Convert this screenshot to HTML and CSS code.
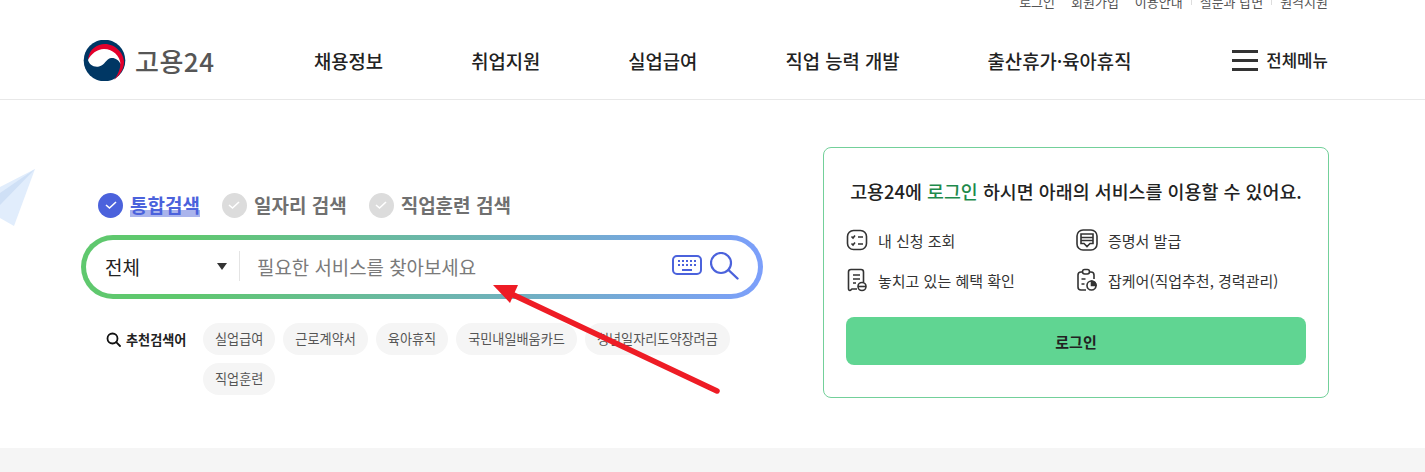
FILE: index.html
```html
<!DOCTYPE html>
<html lang="ko">
<head>
    <meta charset="UTF-8">
    <meta name="viewport" content="width=device-width, initial-scale=1.0">
    <title>고용24</title>
    <link rel="stylesheet" href="styles.css">
</head>
<body>
    <header class="header">
        <div class="util">
            <a>로그인</a>
            <a>회원가입</a>
            <a>이용안내</a>
            <a class="sep">질문과 답변</a>
            <a class="sep">원격지원</a>
        </div>
        <div class="nav-row">
            <div class="logo">
                <svg class="logo-mark" width="43" height="41" viewBox="0 0 43 41">
                    <circle cx="21.5" cy="20.5" r="20.8" fill="#003764"/>
                    <path d="M5 20 C6 9 14 4 22 4 C32 4 41 13 41 22 C41 29 37 35 31 40 C36 33 38 27 37 22 C35 14 28 10 21 10 C13 10 8 15 5 20Z" fill="#e4002b"/>
                    <path d="M5 20 C8 14 14 9 21 9 C30 9 37 16 37.5 24 C36 20 32 17.5 28 18 C23 19 22 25 16 26.500 C10 27.500 6 24 5 20Z" fill="#fff"/>
                </svg>
                <span class="logo-text">고용24</span>
            </div>
            <nav class="gnb">
                <a>채용정보</a>
                <a>취업지원</a>
                <a>실업급여</a>
                <a>직업 능력 개발</a>
                <a>출산휴가·육아휴직</a>
            </nav>
            <div class="all-menu">
                <span class="burger"><i></i><i></i><i></i></span>
                <span>전체메뉴</span>
            </div>
        </div>
    </header>

    <main class="main">
        <svg class="plane" width="36" height="60" viewBox="0 0 36 60">
            <path d="M35 0 L14 57 L0 49 L0 18Z" fill="#e1edfc"/>
            <path d="M35 0 L0 36 L0 24Z" fill="#cfe0f6"/>
        </svg>

        <section class="search-area">
            <div class="scope">
                <label class="scope-item on"><span class="check"><svg width="14" height="10" viewBox="0 0 14 10"><path d="M2 5 L5.5 8 L12 2" fill="none" stroke="#fff" stroke-width="1.6"/></svg></span><b>통합검색</b></label>
                <label class="scope-item"><span class="check"><svg width="14" height="10" viewBox="0 0 14 10"><path d="M2 5 L5.5 8 L12 2" fill="none" stroke="#fff" stroke-width="1.6"/></svg></span><b>일자리 검색</b></label>
                <label class="scope-item"><span class="check"><svg width="14" height="10" viewBox="0 0 14 10"><path d="M2 5 L5.5 8 L12 2" fill="none" stroke="#fff" stroke-width="1.6"/></svg></span><b>직업훈련 검색</b></label>
            </div>

            <div class="search-box">
                <div class="search-inner">
                    <div class="select">
                        <span>전체</span>
                        <i class="caret"></i>
                    </div>
                    <div class="query">필요한 서비스를 찾아보세요</div>
                    <svg class="kbd-icon" width="30" height="20" viewBox="0 0 30 20" fill="none">
                        <rect x="1" y="1" width="28" height="18" rx="4" stroke="#4b62dc" stroke-width="2"/>
                        <path d="M6 6h2M10 6h2M14 6h2M18 6h2M22 6h2M6 10h2M10 10h2M14 10h2M18 10h2M22 10h2" stroke="#4b62dc" stroke-width="2"/>
                        <path d="M10 15h10" stroke="#4b62dc" stroke-width="2"/>
                    </svg>
                    <svg class="find-icon" width="29" height="28" viewBox="0 0 29 28" fill="none">
                        <circle cx="11" cy="11" r="10" stroke="#4b62dc" stroke-width="2.2"/>
                        <path d="M18.5 18 L27.5 26.5" stroke="#4b62dc" stroke-width="2.4" stroke-linecap="round"/>
                    </svg>
                </div>
            </div>

            <div class="keywords">
                <div class="kw-title">
                    <svg width="15" height="15" viewBox="0 0 15 15" fill="none">
                        <circle cx="6.5" cy="6.5" r="5" stroke="#111" stroke-width="1.8"/>
                        <path d="M10.2 10.2 L14 14" stroke="#111" stroke-width="1.8" stroke-linecap="round"/>
                    </svg>
                    <span>추천검색어</span>
                </div>
                <div class="kw-tags">
                    <a>실업급여</a>
                    <a>근로계약서</a>
                    <a>육아휴직</a>
                    <a>국민내일배움카드</a>
                    <a>청년일자리도약장려금</a>
                    <a>직업훈련</a>
                </div>
            </div>
        </section>

        <aside class="login-card">
            <h2>고용24에 <em>로그인</em> 하시면 아래의 서비스를 이용할 수 있어요.</h2>
            <ul class="svc-list">
                <li>
                    <svg width="22" height="22" viewBox="0 0 22 22" fill="none" stroke="#333" stroke-width="1.6">
                        <rect x="1.5" y="1.5" width="19" height="19" rx="6"/>
                        <path d="M5.5 7.5 L7 9 L9 6.5M5.5 14.5 L7 16 L9 13.5M12 8h5M12 15h5"/>
                    </svg>
                    <span>내 신청 조회</span>
                </li>
                <li>
                    <svg width="22" height="22" viewBox="0 0 22 22" fill="none" stroke="#333" stroke-width="1.6">
                        <rect x="1" y="1" width="20" height="20" rx="6"/>
                        <path d="M5 5h12v9.5h-3l-3 3l-3-3h-3zM5 8.5h12M5 11.5h12"/>
                    </svg>
                    <span>증명서 발급</span>
                </li>
                <li>
                    <svg width="22" height="24" viewBox="0 0 22 24" fill="none" stroke="#333" stroke-width="1.6">
                        <path d="M11 21H6c-.8 0-1 1.5-2 1.5s-1.5-1-1.5-2V4c0-1.5 1-2.5 2.500-2.500h10c1.500 0 2.500 1 2.500 2.500v10"/>
                        <path d="M7 7h7M7 11h7M7 15h3"/>
                        <circle cx="16" cy="18.5" r="4"/>
                        <path d="M12 18.5h8"/>
                    </svg>
                    <span>놓치고 있는 혜택 확인</span>
                </li>
                <li>
                    <svg width="22" height="24" viewBox="0 0 22 24" fill="none" stroke="#333" stroke-width="1.6">
                        <path d="M6.5 4H5C3 4 2 5 2 7v12c0 2 1 3 3 3h5"/>
                        <path d="M13.5 4H15c2 0 3 1 3 3v4"/>
                        <rect x="6.5" y="1.5" width="7" height="4.5" rx="2.2"/>
                        <path d="M5.5 11h4M5.5 16h3"/>
                        <circle cx="15.5" cy="17.5" r="4.5"/>
                        <path d="M15.5 17.5V13a4.5 4.5 0 0 1 4.5 4.5z" fill="#333"/>
                    </svg>
                    <span>잡케어(직업추천, 경력관리)</span>
                </li>
            </ul>
            <button class="login-btn">로그인</button>
        </aside>

        <svg class="arrow" width="240" height="120" viewBox="0 0 240 120">
            <path d="M230 112 L18 12" stroke="#ee1c25" stroke-width="5.5" stroke-linecap="round"/>
            <path d="M6 6 L31 6 L23 24Z" fill="#ee1c25"/>
        </svg>
    </main>

    <div class="bottom"></div>
</body>
</html>
```

FILE: styles.css
```css
html, body {
    margin: 0;
    padding: 0;
    height: 100%;
    overflow: hidden;
    background-color: #fff;
    font-family: "Noto Sans CJK KR", "Noto Sans", sans-serif;
    color: #222;
}
.header {
    display: flow-root;
    height: 99px;
    border-bottom: 1px solid #e8e8e8;
    padding: 0 97px 0 83px;
}
.util {
    display: flex;
    justify-content: flex-end;
    gap: 16px;
    height: 12px;
    margin-top: -7px;
    font-size: 13px;
    line-height: 18px;
    color: #555;
}
.util .sep {
    border-left: 1px solid #ddd;
    padding-left: 8px;
    margin-left: -8px;
}
.nav-row {
    display: flex;
    align-items: center;
    height: 74px;
    margin-top: 18px;
}
.logo {
    display: flex;
    align-items: center;
    gap: 9px;
    width: 231px;
}
.logo-text {
    font-size: 26px;
    font-weight: 500;
    color: #565656;
    letter-spacing: 0.5px;
}
.gnb {
    display: flex;
    gap: 88px;
    flex: 1;
    font-size: 18.8px;
    font-weight: 500;
    color: #222;
}
.all-menu {
    display: flex;
    align-items: center;
    gap: 8px;
    font-size: 16.8px;
    font-weight: 500;
}
.burger {
    display: flex;
    flex-direction: column;
    gap: 6px;
    width: 26px;
}
.burger i {
    display: block;
    height: 3px;
    background-color: #333;
}
.main {
    position: relative;
    display: flex;
    justify-content: space-between;
    box-sizing: border-box;
    height: 348px;
    padding: 47px 96px 0 81px;
}
.plane {
    position: absolute;
    left: 0;
    top: 69px;
}
.search-area {
    width: 682px;
    padding-top: 43px;
}
.scope {
    display: flex;
    gap: 22px;
    height: 30px;
    padding-left: 17px;
    margin-bottom: 15px;
}
.scope-item {
    display: flex;
    align-items: center;
    gap: 7px;
    font-size: 19px;
    color: #707070;
}
.scope-item b {
    margin-bottom: 1px;
    font-weight: 700;
}
.check {
    display: flex;
    align-items: center;
    justify-content: center;
    width: 25px;
    height: 25px;
    border-radius: 50%;
    background-color: #dcdcdc;
}
.scope-item.on {
    color: #4b62dc;
}
.scope-item.on .check {
    background-color: #4b62dc;
}
.scope-item.on b {
    background: linear-gradient(transparent 72%, #aab4ec 72%);
    line-height: 24px;
}
.search-box {
    box-sizing: border-box;
    height: 64px;
    padding: 5px;
    border-radius: 32px;
    background: linear-gradient(90deg, #5fc86e 0%, #5fc86e 15%, #7c9ffb 100%);
}
.search-inner {
    display: flex;
    align-items: center;
    box-sizing: border-box;
    height: 54px;
    padding: 0 19px 2px 19px;
    border-radius: 27px;
    background-color: #fff;
}
.select {
    display: flex;
    align-items: center;
    justify-content: space-between;
    box-sizing: border-box;
    width: 135px;
    height: 30px;
    padding-right: 12px;
    border-right: 1px solid #e4e4e4;
    font-size: 19px;
    color: #222;
}
.caret {
    width: 0;
    height: 0;
    border-left: 5px solid transparent;
    border-right: 5px solid transparent;
    border-top: 7px solid #333;
}
.query {
    flex: 1;
    padding-left: 17px;
    font-size: 18.9px;
    color: #7a7a7a;
}
.kbd-icon {
    margin: 0 8px 2px 0;
}
.keywords {
    display: flex;
    margin-top: 24px;
    padding-left: 25px;
}
.kw-title {
    display: flex;
    align-items: center;
    gap: 5px;
    width: 97px;
    height: 32px;
    font-size: 13.15px;
    font-weight: 700;
    color: #222;
}
.kw-tags {
    display: flex;
    flex-wrap: wrap;
    gap: 8px;
    flex: 1;
}
.kw-tags a {
    padding: 0 12px;
    height: 32px;
    line-height: 31px;
    border-radius: 16px;
    background-color: #f5f5f5;
    font-size: 13.15px;
    color: #555;
}
.login-card {
    box-sizing: border-box;
    width: 506px;
    height: 251px;
    padding: 28px 22px 0;
    border: 1px solid #73d09a;
    border-radius: 8px;
}
.login-card h2 {
    margin: 0;
    text-align: center;
    font-size: 18.4px;
    font-weight: 500;
    line-height: 30px;
    color: #222;
}
.login-card em {
    font-style: normal;
    color: #1e8a4c;
}
.svc-list {
    display: grid;
    grid-template-columns: 230px 1fr;
    row-gap: 18px;
    margin: 23px 0 0;
    padding: 0;
    list-style: none;
}
.svc-list li {
    display: flex;
    align-items: center;
    gap: 10px;
    height: 22px;
    font-size: 15px;
    color: #333;
}
.login-btn {
    display: block;
    width: 100%;
    height: 48px;
    margin-top: 26px;
    border: none;
    border-radius: 8px;
    background-color: #60d592;
    font-family: inherit;
    font-size: 15px;
    font-weight: 700;
    color: #222;
}
.arrow {
    position: absolute;
    left: 487px;
    top: 179px;
}
.bottom {
    height: 24px;
    background-color: #f5f5f5;
}
```
